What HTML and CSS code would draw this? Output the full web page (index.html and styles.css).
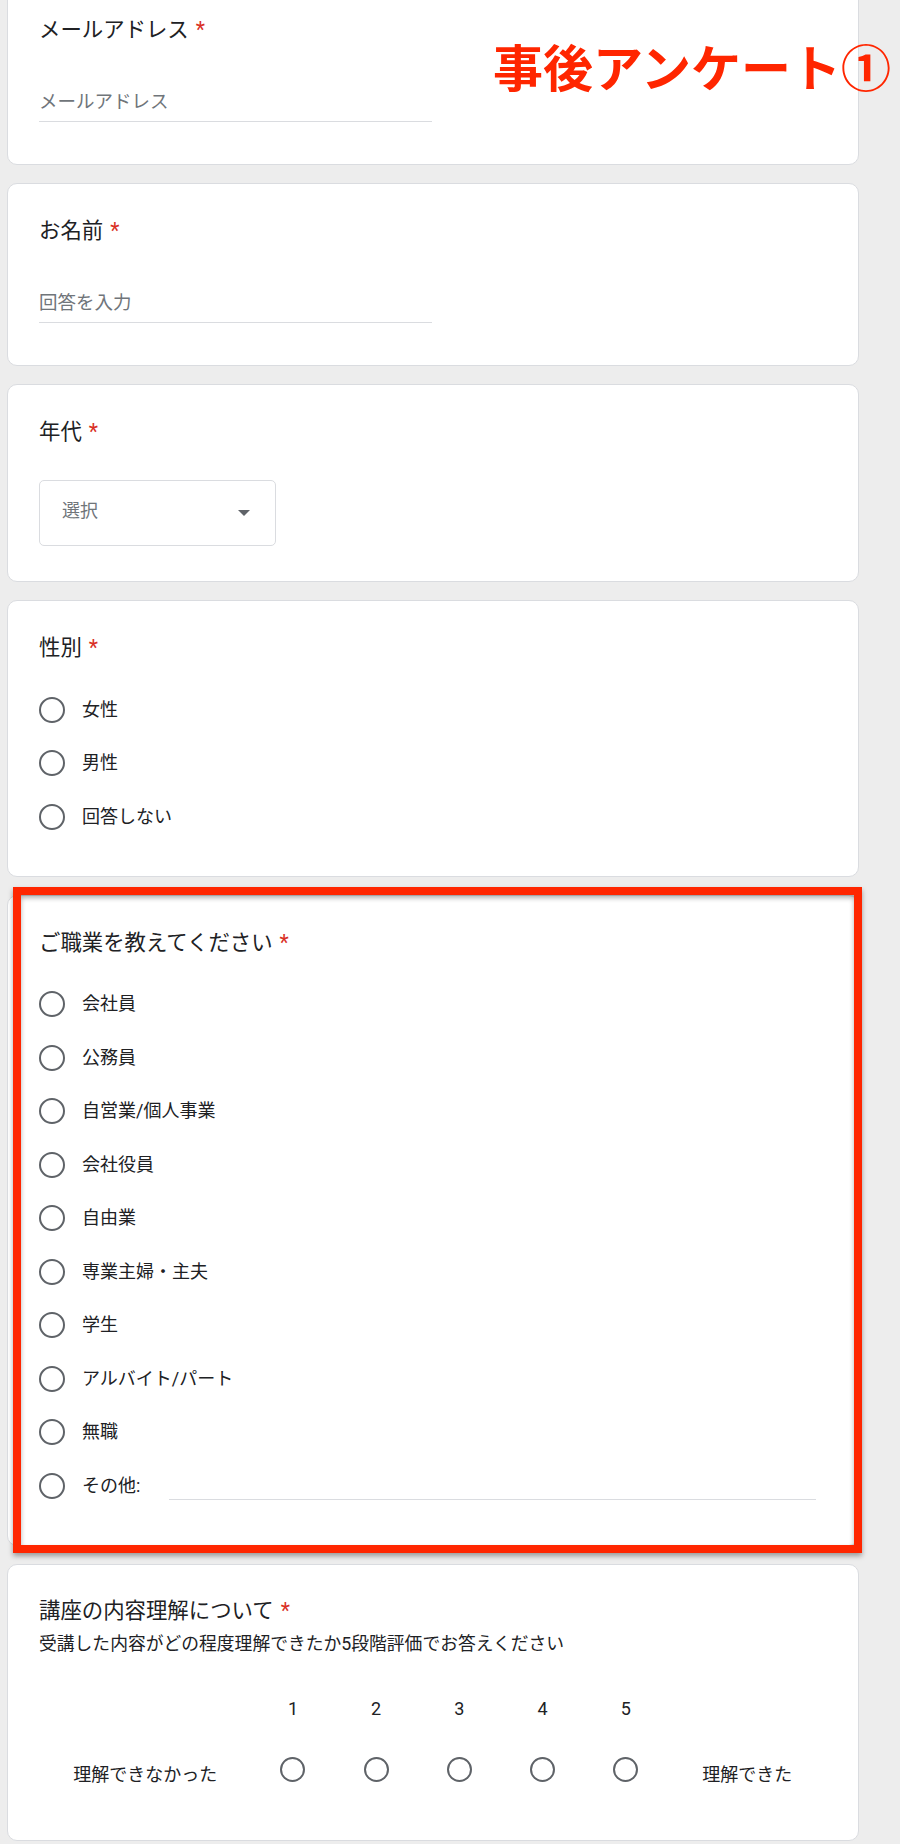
FILE: index.html
```html
<!DOCTYPE html>
<html lang="ja">
<head>
<meta charset="utf-8">
<title>事後アンケート</title>
<link rel="stylesheet" href="styles.css">
</head>
<body>
<div class="page">
  <div class="annotation-title">事後アンケート①</div>

  <section class="card card-text">
    <div class="q-title">メールアドレス<span class="req">*</span></div>
    <div class="text-input">メールアドレス</div>
  </section>

  <section class="card card-text">
    <div class="q-title">お名前<span class="req">*</span></div>
    <div class="text-input">回答を入力</div>
  </section>

  <section class="card card-select">
    <div class="q-title">年代<span class="req">*</span></div>
    <div class="select">
      <span class="select-ph">選択</span>
      <span class="select-arrow"></span>
    </div>
  </section>

  <section class="card card-choice">
    <div class="q-title">性別<span class="req">*</span></div>
    <div class="options">
      <div class="option"><span class="radio"></span><span class="opt-label">女性</span></div>
      <div class="option"><span class="radio"></span><span class="opt-label">男性</span></div>
      <div class="option"><span class="radio"></span><span class="opt-label">回答しない</span></div>
    </div>
  </section>

  <section class="card card-choice card-highlight">
    <div class="q-title">ご職業を教えてください<span class="req">*</span></div>
    <div class="options">
      <div class="option"><span class="radio"></span><span class="opt-label">会社員</span></div>
      <div class="option"><span class="radio"></span><span class="opt-label">公務員</span></div>
      <div class="option"><span class="radio"></span><span class="opt-label">自営業/個人事業</span></div>
      <div class="option"><span class="radio"></span><span class="opt-label">会社役員</span></div>
      <div class="option"><span class="radio"></span><span class="opt-label">自由業</span></div>
      <div class="option"><span class="radio"></span><span class="opt-label">専業主婦・主夫</span></div>
      <div class="option"><span class="radio"></span><span class="opt-label">学生</span></div>
      <div class="option"><span class="radio"></span><span class="opt-label">アルバイト/パート</span></div>
      <div class="option"><span class="radio"></span><span class="opt-label">無職</span></div>
      <div class="option"><span class="radio"></span><span class="opt-label">その他:</span><span class="other-line"></span></div>
    </div>
    <div class="highlight-box"></div>
  </section>

  <section class="card card-scale">
    <div class="q-title">講座の内容理解について<span class="req">*</span></div>
    <div class="q-desc">受講した内容がどの程度理解できたか5段階評価でお答えください</div>
    <div class="scale">
      <span class="scale-cell"></span>
      <span class="scale-num">1</span>
      <span class="scale-num">2</span>
      <span class="scale-num">3</span>
      <span class="scale-num">4</span>
      <span class="scale-num">5</span>
      <span class="scale-cell"></span>

      <span class="scale-label">理解できなかった</span>
      <span class="scale-radio"><span class="radio radio-sm"></span></span>
      <span class="scale-radio"><span class="radio radio-sm"></span></span>
      <span class="scale-radio"><span class="radio radio-sm"></span></span>
      <span class="scale-radio"><span class="radio radio-sm"></span></span>
      <span class="scale-radio"><span class="radio radio-sm"></span></span>
      <span class="scale-label">理解できた</span>
    </div>
  </section>
</div>
</body>
</html>
```

FILE: styles.css
```css
html, body {
  margin: 0;
  padding: 0;
  background: #ededed;
}

body {
  font-family: Roboto, "Noto Sans CJK JP", "Noto Sans", sans-serif;
  color: #202124;
}

.page {
  position: relative;
  width: 852px;
  margin: -18px 0 0 7px;
  display: flex;
  flex-direction: column;
  gap: 18px;
}

.annotation-title {
  position: absolute;
  top: 53px;
  left: 486px;
  z-index: 5;
  font-family: "Noto Sans CJK JP", sans-serif;
  font-weight: 700;
  font-size: 50px;
  line-height: 60px;
  color: #ff2600;
  white-space: nowrap;
}

.card {
  position: relative;
  background: #ffffff;
  border: 1px solid #dadce0;
  border-radius: 10px;
  padding: 33px 31px 42px 31px;
}

.card-select { padding-bottom: 35px; }
.card-choice { padding-bottom: 32px; }
.card-scale { padding-top: 32px; padding-bottom: 45px; }

.q-title {
  font-size: 21.4px;
  line-height: 28px;
  color: #202124;
  white-space: nowrap;
}

.req {
  color: #d93025;
  margin-left: 7px;
}

.text-input {
  margin-top: 45px;
  width: 393px;
  font-size: 18.5px;
  line-height: 26px;
  padding-bottom: 6px;
  border-bottom: 1px solid #dadce0;
  color: #70757a;
}

.select {
  margin-top: 34px;
  width: 237px;
  height: 66px;
  box-sizing: border-box;
  border: 1px solid #dadce0;
  border-radius: 5px;
  padding: 0 25px 0 22px;
  display: flex;
  align-items: center;
  justify-content: space-between;
}

.select-ph {
  font-size: 18px;
  line-height: 24px;
  padding-bottom: 5px;
  color: #70757a;
}

.select-arrow {
  width: 0;
  height: 0;
  border-left: 6px solid transparent;
  border-right: 6px solid transparent;
  border-top: 6px solid #5f6368;
}

.options {
  margin-top: 21px;
  display: flex;
  flex-direction: column;
}

.option {
  height: 53.5px;
  display: flex;
  align-items: center;
}

.radio {
  flex: none;
  width: 26px;
  height: 26px;
  box-sizing: border-box;
  border: 2px solid #5f6368;
  border-radius: 50%;
}

.opt-label {
  margin-left: 17px;
  font-size: 18px;
  line-height: 24px;
  color: #202124;
}

.other-line {
  flex: 1;
  height: 1px;
  background: #dadce0;
  margin: 28px 11px 0 29px;
}

.highlight-box {
  position: absolute;
  top: -9px;
  left: 4.5px;
  right: -4px;
  bottom: -8px;
  border: 8px solid #ff2600;
  box-shadow: 0 3px 5px rgba(0, 0, 0, 0.35), inset 0 3px 5px rgba(0, 0, 0, 0.3);
  pointer-events: none;
}

.q-desc {
  margin-top: 7px;
  font-size: 17.8px;
  line-height: 24px;
  color: #202124;
  white-space: nowrap;
}

.scale {
  margin-top: 41px;
  display: grid;
  grid-template-columns: 212.4px repeat(5, 83.2px) 1fr;
  grid-template-rows: 24px 50px;
  row-gap: 24px;
  font-size: 18px;
}

.scale-num {
  text-align: center;
  line-height: 24px;
}

.scale-label {
  text-align: center;
  line-height: 24px;
  padding-top: 18.5px;
  white-space: nowrap;
}

.scale-radio {
  display: flex;
  align-items: center;
  justify-content: center;
}

.radio-sm {
  width: 25px;
  height: 25px;
}
```
